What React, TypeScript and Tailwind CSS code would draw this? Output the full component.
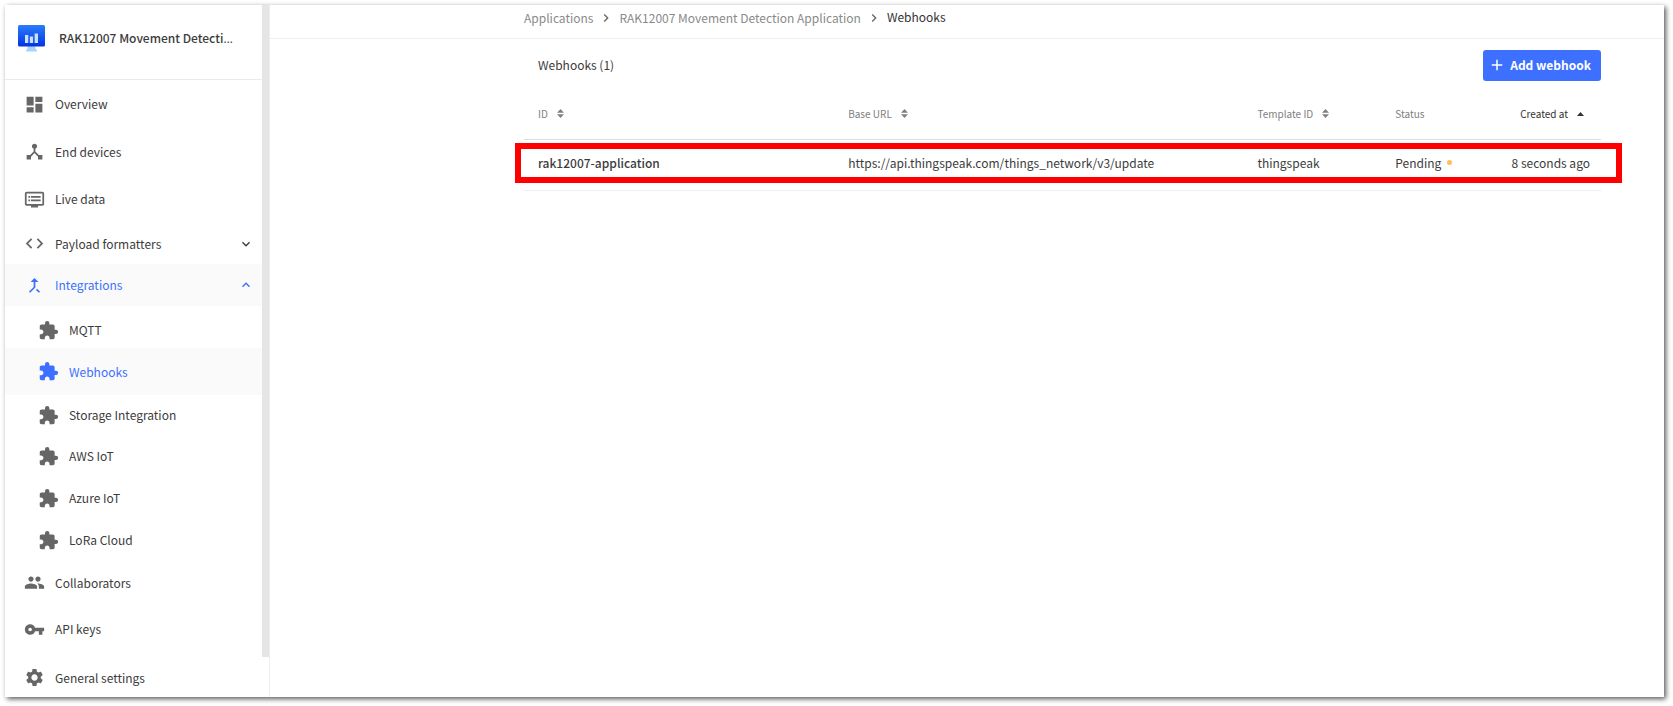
import type { ReactNode } from 'react'
import type { IconType } from 'react-icons'
import {
  MdAdd,
  MdCode,
  MdDashboard,
  MdDeviceHub,
  MdDvr,
  MdExpandLess,
  MdExpandMore,
  MdExtension,
  MdGroup,
  MdKeyboardArrowRight,
  MdMergeType,
  MdSettings,
  MdVpnKey,
} from 'react-icons/md'

type NavItemProps = {
  icon: IconType
  label: string
  height: string
  active?: boolean
  nested?: boolean
}

function NavItem({ icon: Icon, label, height, active, nested }: NavItemProps) {
  return (
    <li>
      <a
        href="#"
        className={`flex items-center gap-[10px] ${height} ${nested ? 'pl-[33px]' : 'pl-[19px]'} ${
          active ? 'bg-[#fafafa] text-[#3d70ff]' : ''
        }`}
      >
        <Icon size={21} className={active ? 'text-[#3d70ff]' : 'text-[#666666]'} />
        {label}
      </a>
    </li>
  )
}

type NavGroupProps = {
  icon: IconType
  label: string
  height: string
  open?: boolean
  children?: ReactNode
}

function NavGroup({ icon: Icon, label, height, open, children }: NavGroupProps) {
  const Arrow = open ? MdExpandLess : MdExpandMore
  return (
    <li>
      <button
        type="button"
        aria-expanded={!!open}
        className={`flex w-full items-center gap-[10px] pr-2 pl-[19px] ${height} ${
          open ? 'bg-[#fafafa] text-[#3d70ff]' : ''
        }`}
      >
        <Icon size={21} className={open ? 'text-[#3d70ff]' : 'text-[#666666]'} />
        {label}
        <Arrow size={16} className="ml-auto" />
      </button>
      {children}
    </li>
  )
}

function AppLogo() {
  return (
    <svg width="27" height="27" viewBox="0 0 27 27" aria-hidden="true" className="shrink-0">
      <defs>
        <linearGradient id="screen" x1="0" y1="0" x2="0" y2="1">
          <stop offset="0" stopColor="#2b7dfb" />
          <stop offset="1" stopColor="#0433e2" />
        </linearGradient>
      </defs>
      <path d="M10 21h7l.8 3c.7.500 1.200 1.200 1.200 2.500H8c0-1.300.5-2 1.200-2.500z" fill="#a5d3fb" />
      <rect width="27" height="21.500" rx="1.500" fill="url(#screen)" />
      <path d="M7 10h3.300v8H7zM11.800 11.500h3.300V18h-3.300zM16.600 8.500h3.400V18h-3.400z" fill="#c5e2ff" />
    </svg>
  )
}

function SortIcon() {
  return (
    <svg width="7" height="9" viewBox="0 0 7 9" fill="currentColor" aria-hidden="true">
      <path d="M0 3.700L3.500 0 7 3.700zM0 5.300L3.500 9 7 5.300z" />
    </svg>
  )
}

function Sidebar() {
  return (
    <aside className="flex w-[265px] shrink-0 overflow-hidden border-r border-[#eeeeee]">
      <div className="flex min-w-0 flex-1 flex-col">
        <div className="flex h-[75px] shrink-0 items-start gap-[14px] border-b border-[#eaeaea] pt-5 pl-[13px]">
          <AppLogo />
          <span className="leading-[25px] font-medium whitespace-nowrap">
            RAK12007 Movement Detecti<span className="font-['Open_Sans',sans-serif]">…</span>
          </span>
        </div>
        <nav>
          <ul>
            <NavItem icon={MdDashboard} label="Overview" height="h-12" />
            <NavItem icon={MdDeviceHub} label="End devices" height="h-[47px]" />
            <NavItem icon={MdDvr} label="Live data" height="h-12" />
            <NavGroup icon={MdCode} label="Payload formatters" height="h-[41px]" />
            <NavGroup icon={MdMergeType} label="Integrations" height="h-[42px]" open>
              <ul className="pt-[6px]">
                <NavItem icon={MdExtension} label="MQTT" height="h-9" nested />
                <NavItem icon={MdExtension} label="Webhooks" height="h-[47px]" nested active />
                <NavItem icon={MdExtension} label="Storage Integration" height="h-10" nested />
                <NavItem icon={MdExtension} label="AWS IoT" height="h-[42px]" nested />
                <NavItem icon={MdExtension} label="Azure IoT" height="h-[42px]" nested />
                <NavItem icon={MdExtension} label="LoRa Cloud" height="h-[42px]" nested />
              </ul>
            </NavGroup>
            <NavItem icon={MdGroup} label="Collaborators" height="h-[43px]" />
            <NavItem icon={MdVpnKey} label="API keys" height="h-[50px]" />
            <NavItem icon={MdSettings} label="General settings" height="h-[47px]" />
          </ul>
        </nav>
      </div>
      <div className="mb-10 w-[7px] shrink-0 bg-[#e5e5e5]" />
    </aside>
  )
}

function Breadcrumbs() {
  return (
    <nav
      aria-label="Breadcrumb"
      className="flex h-[34px] items-center gap-[5px] border-b border-[#eeeeee] pb-2 pl-[254px] text-[#8a8a8a]"
    >
      <a href="#">Applications</a>
      <MdKeyboardArrowRight size={16} className="text-[#666666]" />
      <a href="#">RAK12007 Movement Detection Application</a>
      <MdKeyboardArrowRight size={16} className="text-[#666666]" />
      <span className="pb-[2px] text-[#333333]">Webhooks</span>
    </nav>
  )
}

function SortHeader({ label }: { label: string }) {
  return (
    <button type="button" className="inline-flex items-center gap-[9px]">
      {label}
      <SortIcon />
    </button>
  )
}

function WebhooksTable() {
  return (
    <table className="w-full table-fixed border-collapse text-left">
      <colgroup>
        <col className="w-[28.8%]" />
        <col className="w-[38%]" />
        <col className="w-[12.8%]" />
        <col className="w-[20.4%]" />
      </colgroup>
      <thead className="text-[10px] text-[#808080]">
        <tr className="h-[50px] border-b border-[#dddddd]">
          <th className="pl-[14px] font-normal">
            <SortHeader label="ID" />
          </th>
          <th className="pl-[14px] font-normal">
            <SortHeader label="Base URL" />
          </th>
          <th className="pl-[14px] font-normal">
            <SortHeader label="Template ID" />
          </th>
          <th className="pl-[14px] font-normal">
            <div className="flex items-center justify-between pr-[17px]">
              Status
              <button type="button" className="inline-flex items-center gap-[9px] text-[#333333]">
                Created at
                <svg width="7" height="4" viewBox="0 0 7 4" fill="currentColor" aria-hidden="true">
                  <path d="M0 4L3.500 0 7 4z" />
                </svg>
              </button>
            </div>
          </th>
        </tr>
      </thead>
      <tbody>
        <tr className="relative h-[51px] border-b border-[#eeeeee]">
          <td className="pb-1 pl-[14px] font-medium">rak12007-application</td>
          <td className="pb-1 pl-[14px]">https://api.thingspeak.com/things_network/v3/update</td>
          <td className="pb-1 pl-[14px]">thingspeak</td>
          <td className="pb-1 pl-[14px]">
            <div className="flex items-center justify-between pr-[11px]">
              <span className="flex items-center gap-[6px]">
                Pending
                <span className="size-[5px] rounded-full bg-[#ffbd5c]" />
              </span>
              8 seconds ago
            </div>
            <div className="pointer-events-none absolute top-1 -right-[21px] -left-[9px] h-10 border-6 border-[#ff0000]" />
          </td>
        </tr>
      </tbody>
    </table>
  )
}

export default function App() {
  return (
    <div className="h-screen bg-white pt-[5px] pr-[9px] pb-[9px] pl-[5px] font-['Source_Sans_Pro','Noto_Sans_CJK_SC',sans-serif] text-[12px] leading-5 text-[#3c3c3c]">
      <div className="flex h-full overflow-hidden bg-white shadow-[2px_2px_5px_0px_rgba(0,0,0,0.65)]">
        <Sidebar />
        <main className="min-w-0 flex-1">
          <Breadcrumbs />
          <section className="pt-[11px] pr-[63px] pl-[254px]">
            <div className="flex h-[31px] items-center justify-between pl-[14px]">
              <h1 className="pb-[2px]">Webhooks (1)</h1>
              <button
                type="button"
                className="flex h-[31px] items-center gap-1 rounded-[3px] bg-[#3d70ff] pr-[10px] pb-px pl-[5px] font-bold text-white"
              >
                <MdAdd size={18} />
                Add webhook
              </button>
            </div>
            <div className="pt-2">
              <WebhooksTable />
            </div>
          </section>
        </main>
      </div>
    </div>
  )
}
